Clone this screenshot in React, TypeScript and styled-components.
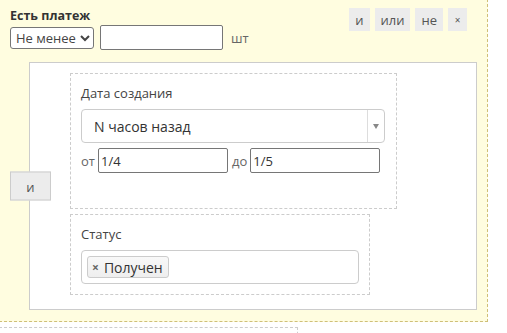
import React from "react";
import styled, { createGlobalStyle } from "styled-components";

const GlobalStyle = createGlobalStyle`
    html, body {
        margin: 0;
        padding: 0;
        background: #fff;
        font-family: "Open Sans", "Liberation Sans", sans-serif;
        color: #333;
    }
`;

const Panel = styled.div`
    position: relative;
    width: 477px;
    margin: -1px 0 0 -1px;
    padding: 8px 0 11px 10px;
    background-color: #fffde0;
    border: 1px dashed #cfbf78;
`;

const Title = styled.div`
    font-size: 12.5px;
    font-weight: 700;
    line-height: 16px;
    color: #333;
`;

const ControlRow = styled.div`
    display: flex;
    align-items: center;
    margin-top: 1px;
`;

const NativeSelect = styled.select`
    width: 84px;
    height: 22px;
    font-family: inherit;
    font-size: 13px;
    color: #444;
    border: 1px solid #767676;
    border-radius: 3px;
    background: #fff;
    padding: 0 1px;
`;

const CountInput = styled.input`
    box-sizing: border-box;
    width: 123px;
    height: 25px;
    margin-left: 6px;
    border: 1px solid #767676;
    border-radius: 2px;
    background: #fff;
`;

const Unit = styled.span`
    margin-left: 8px;
    font-size: 13px;
    color: #666;
`;

const Actions = styled.div`
    position: absolute;
    top: 8px;
    right: 20px;
    display: flex;
    gap: 5px;
`;

const ActionButton = styled.button<{ small?: boolean }>`
    height: 23px;
    padding: 0 6px;
    border: 0;
    background-color: #ececec;
    color: #555;
    font-family: inherit;
    font-size: ${props => props.small ? '10px' : '13px'};
    min-width: ${props => props.small ? '19px' : '20px'};
    cursor: pointer;
`;

const Group = styled.div`
    position: relative;
    margin: 12px 0 0 19px;
    width: 406px;
    padding: 10px 0 14px 40px;
    background-color: #fff;
    border: 1px solid #ccc;
    display: flex;
    flex-direction: column;
    gap: 5px;
`;

const JoinButton = styled.button`
    position: absolute;
    left: -20px;
    top: 50%;
    transform: translateY(-50%);
    width: 41px;
    height: 29px;
    border: 1px solid #ccc;
    background-color: #ececec;
    color: #555;
    font-family: inherit;
    font-size: 13px;
    cursor: pointer;
`;

const Condition = styled.div<{ width: number; bottom?: number }>`
    width: ${props => props.width}px;
    box-sizing: border-box;
    padding: 10px 0 ${props => props.bottom ?? 10}px 10px;
    border: 1px dashed #ccc;
`;

const Label = styled.div`
    font-size: 13px;
    line-height: 18px;
    color: #444;
    margin-bottom: 7px;
`;

const Chosen = styled.div<{ width: number }>`
    box-sizing: border-box;
    width: ${props => props.width}px;
    height: 34px;
    border: 1px solid #ccc;
    border-radius: 4px;
    background: #fff;
    display: flex;
    align-items: center;
`;

const ChosenText = styled.span`
    flex: 1;
    padding-left: 12px;
    font-size: 14px;
    color: #333;
`;

const ChosenArrow = styled.span`
    width: 16px;
    align-self: stretch;
    border-left: 1px solid #ddd;
    display: flex;
    align-items: center;
    justify-content: center;
    &::after {
        content: "";
        border-left: 3.5px solid transparent;
        border-right: 3.5px solid transparent;
        border-top: 5px solid #888;
    }
`;

const RangeRow = styled.div`
    display: flex;
    align-items: center;
    margin-top: 5px;
    font-size: 13px;
    color: #666;
`;

const RangeInput = styled.input`
    box-sizing: border-box;
    width: 130px;
    height: 25px;
    margin: 0 4px 0 3px;
    padding: 0 2px;
    border: 1px solid #767676;
    border-radius: 2px;
    font-family: inherit;
    font-size: 13px;
    color: #333;
`;

const TagBox = styled(Chosen)`
    padding-left: 5px;
`;

const Tag = styled.span`
    display: inline-flex;
    align-items: center;
    height: 22px;
    box-sizing: border-box;
    padding: 0 5px 0 4px;
    border: 1px solid #ccc;
    border-radius: 3px;
    background: linear-gradient(#f8f8f8, #eee);
    font-size: 14px;
    color: #333;
`;

const TagRemove = styled.span`
    margin-right: 5px;
    font-size: 12px;
    font-weight: 700;
    color: #666;
`;

const NextBlock = styled.div`
    width: 297px;
    height: 20px;
    margin: 5px 0 0 -1px;
    border: 1px dashed #ccc;
`;

export default function App() {
    return (
        <>
            <GlobalStyle />
            <Panel>
                <Title>Есть платеж</Title>
                <ControlRow>
                    <NativeSelect defaultValue="min">
                        <option value="min">Не менее</option>
                        <option value="max">Не более</option>
                    </NativeSelect>
                    <CountInput />
                    <Unit>шт</Unit>
                </ControlRow>
                <Actions>
                    <ActionButton>и</ActionButton>
                    <ActionButton>или</ActionButton>
                    <ActionButton>не</ActionButton>
                    <ActionButton small>×</ActionButton>
                </Actions>
                <Group>
                    <JoinButton>и</JoinButton>
                    <Condition width={327} bottom={35}>
                        <Label>Дата создания</Label>
                        <Chosen width={304}>
                            <ChosenText>N часов назад</ChosenText>
                            <ChosenArrow />
                        </Chosen>
                        <RangeRow>
                            от<RangeInput defaultValue="1/4" />
                            до<RangeInput defaultValue="1/5" />
                        </RangeRow>
                    </Condition>
                    <Condition width={300}>
                        <Label>Статус</Label>
                        <TagBox width={278}>
                            <Tag><TagRemove>×</TagRemove>Получен</Tag>
                        </TagBox>
                    </Condition>
                </Group>
            </Panel>
            <NextBlock />
        </>
    );
}
